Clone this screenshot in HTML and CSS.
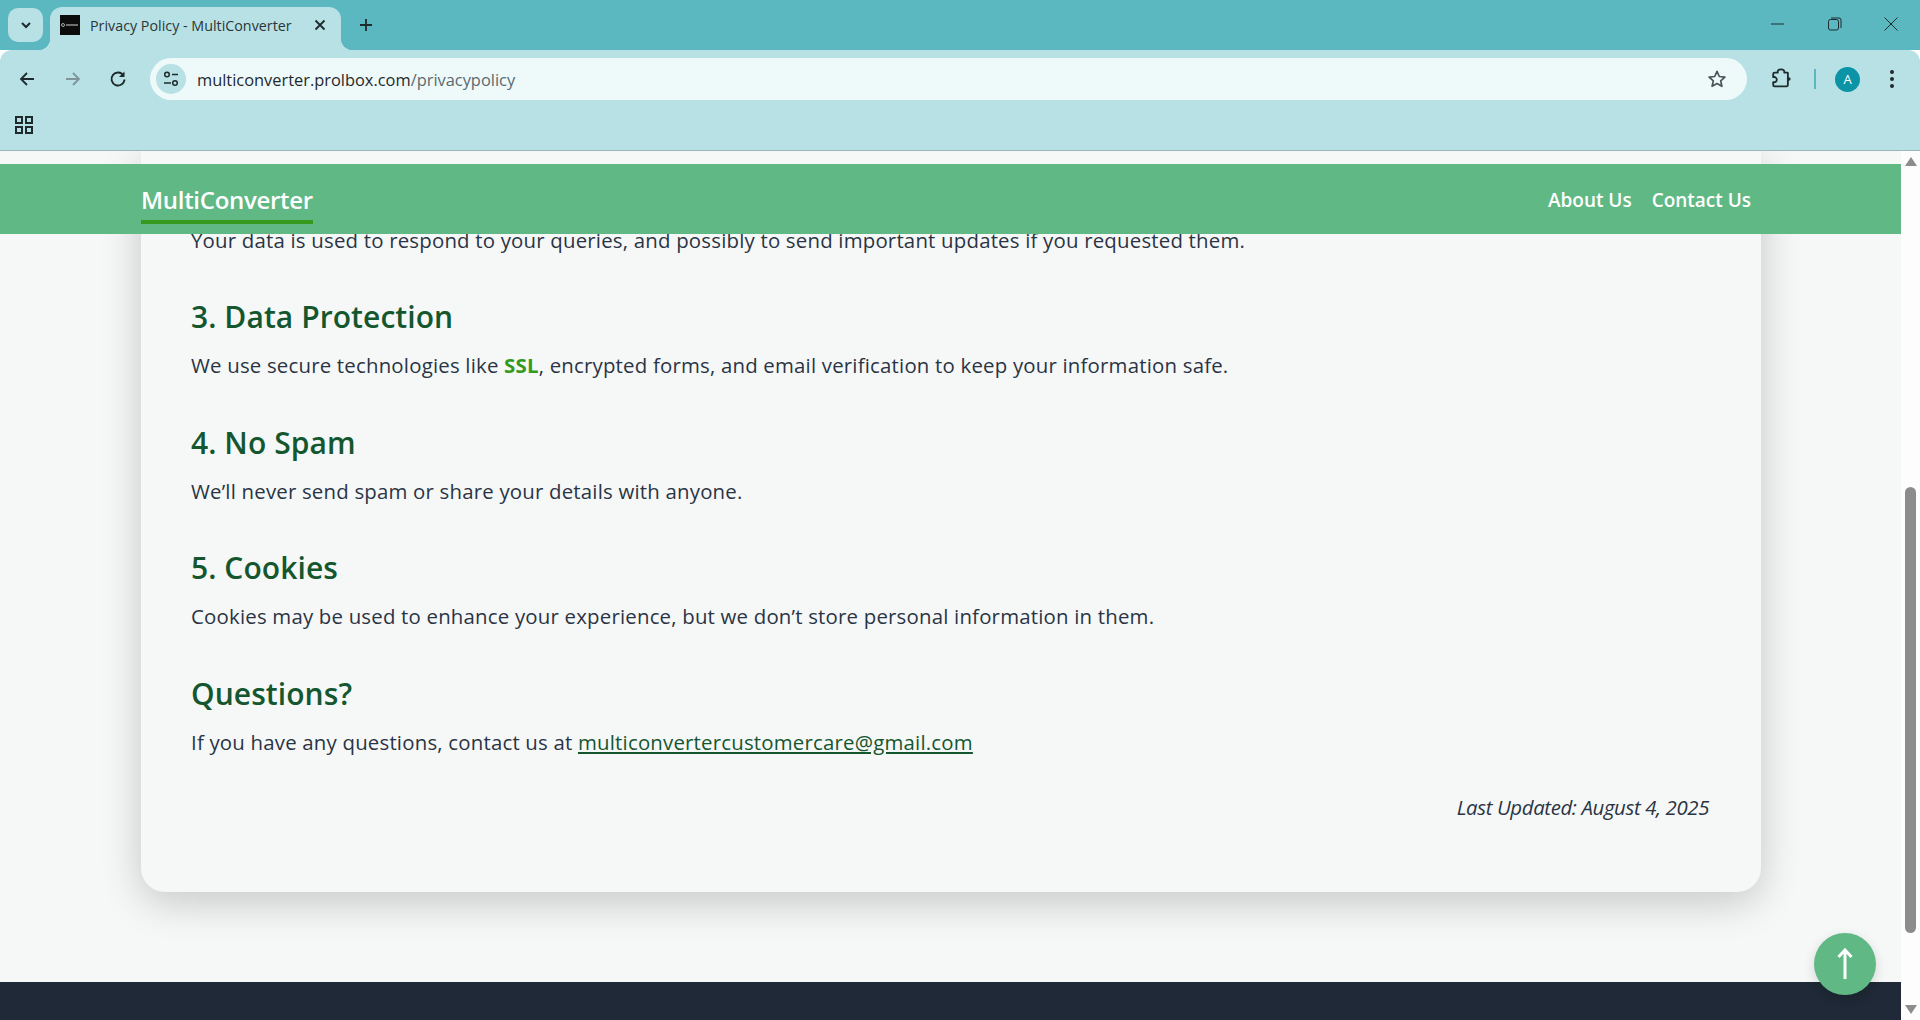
FILE: index.html
```html
<!DOCTYPE html>
<html lang="en">
  <head>
    <meta charset="UTF-8" />
    <meta name="viewport" content="width=device-width, initial-scale=1.0" />
    <title>Privacy Policy - MultiConverter</title>
    <link rel="stylesheet" href="styles.css">
  </head>
  <body>
    <div class="browser">
      <!-- Tab strip -->
      <div class="tabstrip">
        <button class="tab-list">
          <svg width="14" height="14" viewBox="0 0 14 14"><path d="M3 5l4 4 4-4" fill="none" stroke="#1f2a2c" stroke-width="2"/></svg>
        </button>
        <div class="tab">
          <div class="favicon"><span class="favicon-dot"></span><span class="favicon-mark"></span></div>
          <span class="tab-title">Privacy Policy - MultiConverter</span>
          <svg class="tab-close" width="12" height="12" viewBox="0 0 12 12"><path d="M1.5 1.5l9 9M10.5 1.5l-9 9" stroke="#1f2a2c" stroke-width="1.8"/></svg>
        </div>
        <svg class="new-tab" width="14" height="14" viewBox="0 0 14 14"><path d="M7 1v12M1 7h12" stroke="#1f2a2c" stroke-width="1.8"/></svg>
        <div class="window-controls">
          <svg width="14" height="14" viewBox="0 0 14 14"><path d="M0 7h13" stroke="#1f2a2c" stroke-width="1"/></svg>
          <svg width="14" height="14" viewBox="0 0 14 14"><rect x=".5" y="2.5" width="10" height="10.5" rx="2" fill="none" stroke="#1f2a2c"/><path d="M3 1h8a2 2 0 0 1 2 2v8" fill="none" stroke="#1f2a2c"/></svg>
          <svg width="14" height="14" viewBox="0 0 14 14"><path d="M.5.5l13 13M13.500.5l-13 13" stroke="#1f2a2c" stroke-width="1"/></svg>
        </div>
      </div>

      <!-- Address bar -->
      <div class="toolbar">
        <div class="nav-buttons">
          <svg width="18" height="18" viewBox="0 0 18 18"><path d="M16 9H3M9 3L3 9l6 6" fill="none" stroke="#1f2a2c" stroke-width="1.8"/></svg>
          <svg width="18" height="18" viewBox="0 0 18 18"><path d="M2 9h13M9 3l6 6-6 6" fill="none" stroke="#7f9599" stroke-width="1.8"/></svg>
          <svg width="18" height="18" viewBox="0 0 18 18"><path d="M14.500 5.500A6.500 6.500 0 1 0 15.500 9.500" fill="none" stroke="#1f2a2c" stroke-width="1.900"/><path d="M15.500 1.500v5.500h-5.500z" fill="#1f2a2c"/></svg>
        </div>
        <div class="omnibox">
          <div class="site-info">
            <svg width="18" height="18" viewBox="0 0 18 18"><circle cx="5" cy="4.500" r="2.300" fill="none" stroke="#1f2a2c" stroke-width="1.500"/><path d="M10 4.500h6M2 13h7" stroke="#1f2a2c" stroke-width="1.500"/><circle cx="13" cy="13" r="2.300" fill="none" stroke="#1f2a2c" stroke-width="1.500"/></svg>
          </div>
          <span class="url">multiconverter.prolbox.com<span class="url-path">/privacypolicy</span></span>
          <svg class="star" width="20" height="20" viewBox="0 0 20 20"><path d="M10 2.300l2.300 5.200 5.600.6-4.200 3.700 1.200 5.500L10 14.500l-4.900 2.800 1.200-5.500-4.200-3.700 5.600-.6z" fill="none" stroke="#4b5558" stroke-width="1.700" stroke-linejoin="round"/></svg>
        </div>
        <div class="toolbar-actions">
          <svg class="extensions" width="22" height="22" viewBox="0 0 24 24"><path d="M8.500 5H5a1.500 1.500 0 0 0-1.500 1.500V10c2.400-.6 3.900 1 3.900 2.700S5.900 16 3.500 15.400v3.100A1.500 1.500 0 0 0 5 20h13a1.500 1.500 0 0 0 1.500-1.500V5.500A.5.5 0 0 0 19 5h-3.500c.5-2.400-1-3.500-3.500-3.500S8 2.600 8.500 5z" fill="none" stroke="#1f2a2c" stroke-width="2" stroke-linejoin="round"/><circle cx="20.500" cy="12" r="2" fill="#1f2a2c"/></svg>
          <span class="separator"></span>
          <span class="avatar">A</span>
          <svg class="kebab" width="6" height="20" viewBox="0 0 6 20"><circle cx="3" cy="3" r="2" fill="#1f2a2c"/><circle cx="3" cy="10" r="2" fill="#1f2a2c"/><circle cx="3" cy="17" r="2" fill="#1f2a2c"/></svg>
        </div>
      </div>

      <!-- Bookmarks bar -->
      <div class="bookmarks">
        <svg width="18" height="18" viewBox="0 0 18 18"><g fill="none" stroke="#1f2a2c" stroke-width="2"><rect x="1" y="1" width="6" height="6"/><rect x="11" y="1" width="6" height="6"/><rect x="1" y="11" width="6" height="6"/><rect x="11" y="11" width="6" height="6"/></g></svg>
      </div>

      <div class="viewport">
        <div class="page">
          <div class="site-nav">
            <span class="brand">MultiConverter</span>
            <div class="nav-links">
              <a href="#">About Us</a>
              <a href="#">Contact Us</a>
            </div>
          </div>

          <div class="card">
            <p>Your data is used to respond to your queries, and possibly to send important updates if you requested them.</p>

            <h2>3. Data Protection</h2>
            <p>We use secure technologies like <strong>SSL</strong>, encrypted forms, and email verification to keep your information safe.</p>

            <h2>4. No Spam</h2>
            <p>We’ll never send spam or share your details with anyone.</p>

            <h2>5. Cookies</h2>
            <p>Cookies may be used to enhance your experience, but we don’t store personal information in them.</p>

            <h2>Questions?</h2>
            <p>If you have any questions, contact us at <a href="#">multiconvertercustomercare@gmail.com</a></p>

            <p class="updated">Last Updated: August 4, 2025</p>
          </div>

          <div class="footer"></div>

          <button class="to-top">
            <svg width="16" height="32" viewBox="0 0 16 32"><path d="M8 31V3M1.500 9L8 2l6.500 7" fill="none" stroke="#fff" stroke-width="3"/></svg>
          </button>
        </div>

        <div class="scrollbar">
          <span class="arrow-up"></span>
          <div class="track"><div class="thumb"></div></div>
          <span class="arrow-down"></span>
        </div>
      </div>
    </div>
  </body>
</html>
```

FILE: styles.css
```css
* {
  box-sizing: border-box;
}
body {
  margin: 0;
  font-family: "Open Sans", "Noto Sans", sans-serif;
  overflow: hidden;
}
svg {
  display: block;
  flex: none;
}
button {
  border: none;
  padding: 0;
}
.browser {
  height: 100vh;
  display: flex;
  flex-direction: column;
}

/* tab strip */
.tabstrip {
  height: 50px;
  background-color: #5bb8c1;
  display: flex;
  align-items: flex-end;
  padding-left: 8px;
  position: relative;
}
.tab-list {
  width: 35px;
  height: 34px;
  margin-bottom: 8px;
  border-radius: 10px;
  background-color: #b7e1e5;
  display: flex;
  align-items: center;
  justify-content: center;
}
.tab {
  width: 291px;
  height: 43px;
  margin-left: 7px;
  padding: 0 15px 7px 10px;
  background-color: #b7e1e5;
  border-radius: 12px 12px 0 0;
  display: flex;
  align-items: center;
  position: relative;
}
.tab::before,
.tab::after {
  content: "";
  position: absolute;
  bottom: 0;
  width: 12px;
  height: 12px;
}
.tab::before {
  left: -12px;
  background: radial-gradient(circle at 0 0, transparent 12px, #b7e1e5 12.5px);
}
.tab::after {
  right: -12px;
  background: radial-gradient(circle at 100% 0, transparent 12px, #b7e1e5 12.5px);
}
.favicon {
  width: 20px;
  height: 20px;
  padding-left: 1px;
  background-color: #0b0b0b;
  display: flex;
  align-items: center;
  gap: 1px;
}
.favicon-dot {
  width: 4px;
  height: 4px;
  border-radius: 50%;
  border: 1px solid #aaa;
}
.favicon-mark {
  width: 12px;
  height: 2px;
  background-color: #6e6e6e;
}
.tab-title {
  margin-left: 10px;
  font-size: 14.3px;
  color: #2b3638;
  flex: 1;
  white-space: nowrap;
}
.new-tab {
  margin: 0 0 18px 18px;
}
.window-controls {
  margin-left: auto;
  width: 149px;
  padding-bottom: 19px;
  padding-right: 22px;
  display: flex;
  justify-content: space-between;
  align-self: flex-end;
}

/* toolbar */
.toolbar {
  height: 57px;
  background-color: #b7e1e5;
  border-radius: 12px 12px 0 0;
  display: flex;
  align-items: flex-start;
  padding-top: 8px;
  position: relative;
}
.nav-buttons {
  width: 150px;
  height: 42px;
  padding: 0 23px 0 18px;
  display: flex;
  align-items: center;
  justify-content: space-between;
}
.omnibox {
  width: 1597px;
  height: 42px;
  background-color: #eef9fa;
  border-radius: 21px;
  display: flex;
  align-items: center;
  padding: 0 20px 0 6px;
}
.site-info {
  width: 30px;
  height: 30px;
  border-radius: 50%;
  background-color: #b7e1e5;
  display: flex;
  align-items: center;
  justify-content: center;
}
.url {
  margin-left: 11px;
  padding-top: 1px;
  font-size: 16.4px;
  color: #1f2a2c;
  flex: 1;
}
.url-path {
  color: #5a6a6e;
}
.toolbar-actions {
  flex: 1;
  height: 42px;
  padding: 0 25px 0 22px;
  display: flex;
  align-items: center;
}
.extensions {
  margin-left: 1px;
}
.separator {
  width: 2px;
  height: 20px;
  margin-left: 22px;
  background-color: #5bb8c1;
}
.avatar {
  width: 25px;
  height: 25px;
  margin-left: 19px;
  border-radius: 50%;
  background-color: #0b93a6;
  color: #fff;
  font-size: 13px;
  display: flex;
  align-items: center;
  justify-content: center;
}
.kebab {
  margin-left: auto;
}
.bookmarks {
  height: 44px;
  background-color: #b7e1e5;
  border-bottom: 1px solid #98b7bd;
  padding: 9px 0 0 15px;
}

/* page */
.viewport {
  flex: 1;
  display: flex;
  min-height: 0;
}
.page {
  flex: 1;
  background-color: #f6f8f8;
  position: relative;
  overflow: hidden;
  display: flex;
  flex-direction: column;
}
.site-nav {
  position: absolute;
  top: 13px;
  left: 0;
  right: 0;
  height: 70px;
  padding: 0 150px 0 141px;
  background-color: #60b884;
  color: #fff;
  display: flex;
  align-items: center;
  justify-content: space-between;
  z-index: 2;
}
.brand {
  font-size: 24px;
  font-weight: 600;
  line-height: 30px;
  padding: 6px 0 5px;
  border-bottom: 4px solid #339a1e;
  letter-spacing: -0.3px;
  margin-top: 5px;
}
.nav-links {
  display: flex;
  gap: 20px;
  padding-top: 2px;
}
.nav-links a {
  color: #fff;
  text-decoration: none;
  font-size: 19px;
  font-weight: 600;
  letter-spacing: -0.02px;
}
.card {
  margin: 0 140px 90px 141px;
  padding: 71.5px 52px 68.5px 50px;
  background-color: #f6f8f8;
  border-radius: 0 0 24px 24px;
  box-shadow: 0 10px 40px rgba(0, 0, 0, 0.2);
}
.card p {
  margin: 0;
  font-size: 20.4px;
  line-height: 34px;
  color: #2a3444;
  letter-spacing: 0.2px;
}
.card h2 {
  margin: 41.5px 0 12px;
  font-size: 30px;
  line-height: 38px;
  font-weight: 600;
  color: #14572f;
  letter-spacing: 0.07px;
}
.card strong {
  color: #339a1e;
}
.card a {
  color: #14572f;
}
.card .updated {
  margin-top: 31px;
  text-align: right;
  font-style: italic;
  letter-spacing: -0.38px;
}
.footer {
  flex: 1;
  background-color: #1f2937;
}
.to-top {
  position: absolute;
  top: 782px;
  left: 1814px;
  width: 62px;
  height: 62px;
  border-radius: 50%;
  background-color: #60b884;
  box-shadow: 0 4px 12px rgba(0, 0, 0, 0.15);
  display: flex;
  align-items: center;
  justify-content: center;
}

/* scrollbar */
.scrollbar {
  width: 19px;
  background-color: #fdfdfd;
  display: flex;
  flex-direction: column;
  align-items: center;
  padding: 6px 0;
}
.track {
  flex: 1;
  width: 100%;
  padding-top: 321px;
}
.thumb {
  width: 11px;
  height: 446px;
  margin: 0 auto;
  border-radius: 6px;
  background-color: #8c8c8c;
}
.arrow-up,
.arrow-down {
  width: 0;
  height: 0;
  border-left: 6px solid transparent;
  border-right: 6px solid transparent;
}
.arrow-up {
  border-bottom: 9px solid #8c8c8c;
}
.arrow-down {
  border-top: 9px solid #8c8c8c;
}
```
